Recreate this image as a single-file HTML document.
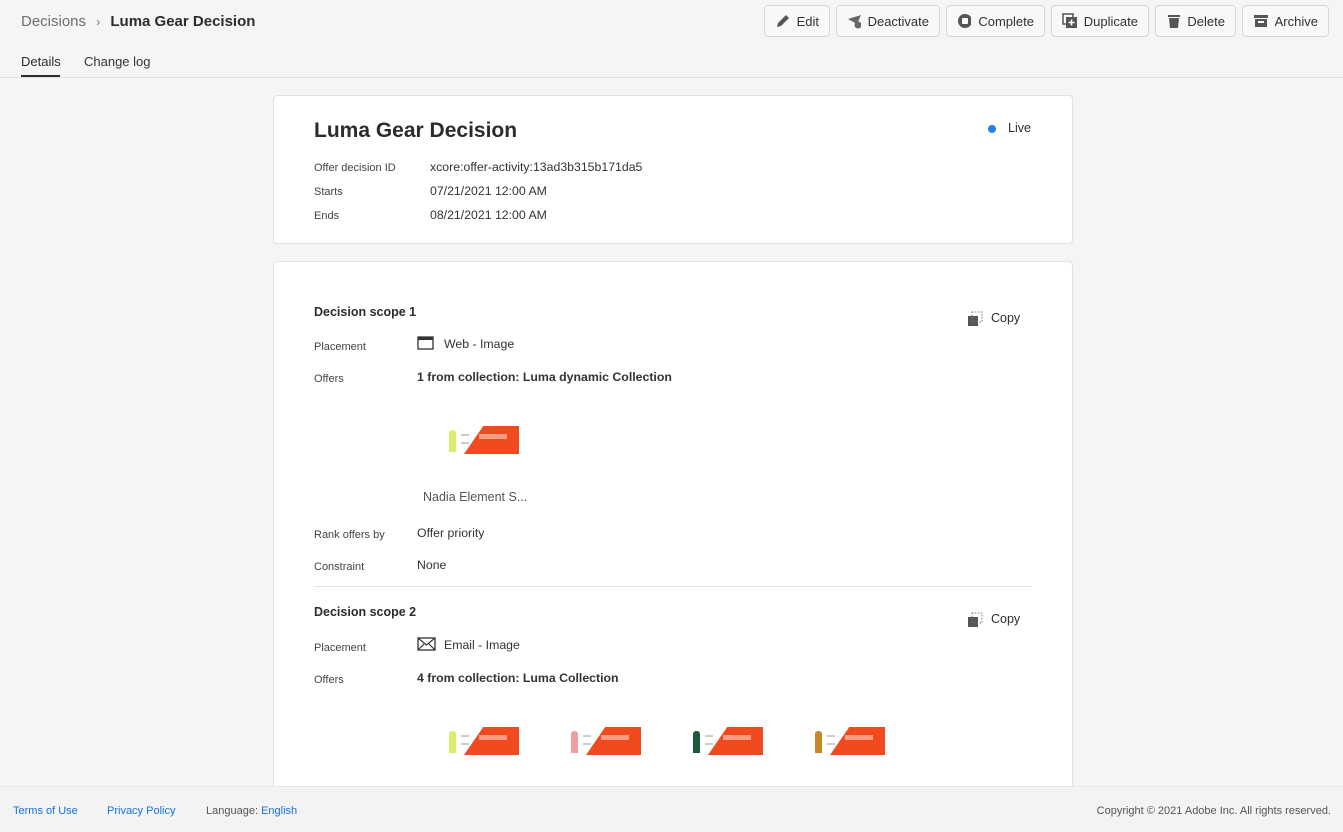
<!DOCTYPE html>
<html><head><meta charset="utf-8"><style>
*{box-sizing:border-box;margin:0;padding:0}
body{width:1343px;height:832px;overflow:hidden;background:#f5f5f5;font-family:"Liberation Sans",sans-serif;color:#2c2c2c;position:relative}
.abs{position:absolute}
.btn{position:absolute;top:5px;height:32px;border:1px solid #d8d8d8;border-radius:4px;background:#f8f8f8;font-size:13px;color:#323232;display:flex;align-items:center;padding:0 10px;gap:7px}
.card{position:absolute;left:273px;width:800px;background:#fff;border:1px solid #e1e1e1;border-radius:4px}
.lbl{position:absolute;font-size:11px;color:#444}
.val{position:absolute;font-size:12.3px;color:#333}
.b{font-weight:bold}
.ban{position:absolute;width:80px;height:28px;background:#fff;overflow:hidden}
.ban .o{position:absolute;left:25px;top:0;width:55px;height:28px;background:#f04a1e;clip-path:polygon(35% 0,100% 0,100% 100%,0 100%)}
.ban .p{position:absolute;left:10px;top:4px;width:7px;height:22px;background:#d7ef6a;border-radius:3px 3px 0 0}
.ban .t{position:absolute;left:40px;top:8px;width:28px;height:5px;background:#ffd5c8;opacity:.6}
.ban .s{position:absolute;left:22px;top:8px;width:8px;height:10px;border-top:2px solid #ccc;border-bottom:2px solid #ccc}
</style></head><body>
<div class="abs" style="left:21px;top:13px;font-size:15px;color:#6e6e6e">Decisions <span style="margin:0 6px;font-size:12px">›</span> <span style="color:#2c2c2c;font-weight:bold">Luma Gear Decision</span></div>
<div class="btn" style="left:764px;width:66px"><svg width="16" height="16"><path d="M2 14l1-4 8-8 3 3-8 8z" fill="#555"/></svg>Edit</div>
<div class="btn" style="left:836px;width:104px"><svg width="16" height="16"><path d="M1 6l13-4-4 9z" fill="#666"/><circle cx="11" cy="12" r="3.5" fill="#666"/></svg>Deactivate</div>
<div class="btn" style="left:946px;width:99px"><svg width="16" height="16"><circle cx="8" cy="8" r="7" fill="#555"/><rect x="5" y="5" width="6" height="6" rx="1" fill="#fff"/></svg>Complete</div>
<div class="btn" style="left:1051px;width:98px"><svg width="16" height="16"><rect x="1" y="1" width="10" height="10" fill="none" stroke="#555" stroke-width="1.5"/><rect x="4" y="4" width="11" height="11" fill="#555"/><path d="M9.5 6.5v6M6.5 9.5h6" stroke="#fff" stroke-width="1.5"/></svg>Duplicate</div>
<div class="btn" style="left:1155px;width:81px"><svg width="16" height="16"><rect x="2" y="2" width="12" height="2" fill="#555"/><path d="M3 5h10l-1 10H4z" fill="#555"/></svg>Delete</div>
<div class="btn" style="left:1242px;width:87px"><svg width="16" height="16"><rect x="1" y="2" width="14" height="3" fill="#555"/><rect x="2" y="6" width="12" height="8" fill="#555"/><rect x="5" y="8" width="6" height="2" fill="#fff"/></svg>Archive</div>
<div class="abs" style="left:21px;top:54px;font-size:13px">Details</div>
<div class="abs" style="left:21px;top:75px;width:39px;height:2px;background:#2c2c2c"></div>
<div class="abs" style="left:84px;top:54px;font-size:13px;color:#333">Change log</div>
<div class="abs" style="left:0;top:77px;width:1343px;height:1px;background:#e1e1e1"></div>

<div class="card" style="top:95px;height:149px">
<div class="abs b" style="left:40px;top:23px;font-size:21px;color:#2c2c2c">Luma Gear Decision</div>
<div class="abs" style="left:714px;top:29px;width:8px;height:8px;border-radius:50%;background:#2680eb"></div>
<div class="abs" style="left:734px;top:25px;font-size:12.5px">Live</div>
<div class="lbl" style="left:40px;top:66px">Offer decision ID</div><div class="val" style="left:156px;top:64px">xcore:offer-activity:13ad3b315b171da5</div>
<div class="lbl" style="left:40px;top:90px">Starts</div><div class="val" style="left:156px;top:88px">07/21/2021 12:00 AM</div>
<div class="lbl" style="left:40px;top:114px">Ends</div><div class="val" style="left:156px;top:112px">08/21/2021 12:00 AM</div>
</div>

<div class="card" style="top:261px;height:560px">
<div class="abs b" style="left:40px;top:43px;font-size:12.5px">Decision scope 1</div>
<div class="abs" style="left:693px;top:49px;font-size:12.5px;display:flex;gap:8px"><svg width="16" height="16"><rect x="1" y="5" width="10" height="10" fill="#555"/><rect x="5" y="1" width="10" height="10" fill="none" stroke="#777" stroke-dasharray="1.5 1.5"/></svg>Copy</div>
<div class="lbl" style="left:40px;top:79px">Placement</div>
<svg class="abs" style="left:143px;top:74px" width="18" height="15"><rect x="1" y="1" width="15" height="12" fill="none" stroke="#333" stroke-width="1.3"/><rect x="1" y="1" width="15" height="3" fill="#333"/></svg>
<div class="val" style="left:170px;top:75px">Web - Image</div>
<div class="lbl" style="left:40px;top:111px">Offers</div>
<div class="val b" style="left:143px;top:108px">1 from collection: Luma dynamic Collection</div>
<div class="ban" style="left:165px;top:164px"><div class="o"></div><div class="p"></div><div class="s"></div><div class="t"></div></div>
<div class="abs" style="left:149px;top:228px;font-size:12.5px;color:#555">Nadia Element S...</div>
<div class="lbl" style="left:40px;top:267px">Rank offers by</div><div class="val" style="left:143px;top:264px">Offer priority</div>
<div class="lbl" style="left:40px;top:299px">Constraint</div><div class="val" style="left:143px;top:296px">None</div>
<div class="abs" style="left:40px;top:324px;width:718px;height:1px;background:#e1e1e1"></div>
<div class="abs b" style="left:40px;top:343px;font-size:12.5px">Decision scope 2</div>
<div class="abs" style="left:693px;top:350px;font-size:12.5px;display:flex;gap:8px"><svg width="16" height="16"><rect x="1" y="5" width="10" height="10" fill="#555"/><rect x="5" y="1" width="10" height="10" fill="none" stroke="#777" stroke-dasharray="1.5 1.5"/></svg>Copy</div>
<div class="lbl" style="left:40px;top:380px">Placement</div>
<svg class="abs" style="left:143px;top:375px" width="19" height="14"><rect x="1" y="1" width="17" height="12" fill="none" stroke="#333" stroke-width="1.3"/><path d="M1 1l8.5 7L18 1M1 13l6-6M18 13l-6-6" fill="none" stroke="#333" stroke-width="1.2"/></svg>
<div class="val" style="left:170px;top:376px">Email - Image</div>
<div class="lbl" style="left:40px;top:412px">Offers</div>
<div class="val b" style="left:143px;top:409px">4 from collection: Luma Collection</div>
<div class="ban" style="left:165px;top:465px"><div class="o"></div><div class="p"></div><div class="s"></div><div class="t"></div></div>
<div class="ban" style="left:287px;top:465px"><div class="o"></div><div class="p" style="background:#f0a0a0"></div><div class="s"></div><div class="t"></div></div>
<div class="ban" style="left:409px;top:465px"><div class="o"></div><div class="p" style="background:#1e5a3a"></div><div class="s"></div><div class="t"></div></div>
<div class="ban" style="left:531px;top:465px"><div class="o"></div><div class="p" style="background:#c8862a"></div><div class="s"></div><div class="t"></div></div>
</div>

<div class="abs" style="left:0;top:786px;width:1343px;height:46px;background:#f3f3f3;border-top:1px solid #e6e6e6;font-size:11px">
<span class="abs" style="left:13px;top:18px;color:#1473e6">Terms of Use</span>
<span class="abs" style="left:107px;top:18px;color:#1473e6">Privacy Policy</span>
<span class="abs" style="left:206px;top:18px;color:#555">Language: <span style="color:#1473e6">English</span></span>
<span class="abs" style="right:12px;top:18px;color:#555">Copyright © 2021 Adobe Inc. All rights reserved.</span>
</div>
</body></html>
